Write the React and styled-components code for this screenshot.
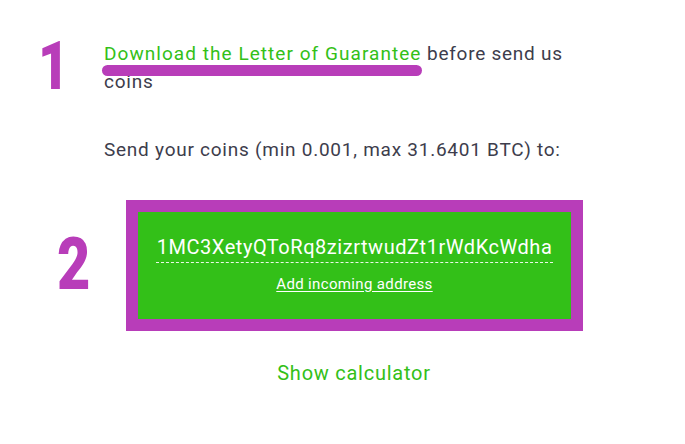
import React from 'react';
import styled, { createGlobalStyle } from 'styled-components';

const GREEN = '#33c018';
const PURPLE = '#b83db9';

const Global = createGlobalStyle`
  html, body { margin: 0; padding: 0; background: #ffffff; }
  body { font-family: Roboto, "Noto Sans", sans-serif; color: #3d3d4c; }
`;

const Page = styled.main`
  display: grid;
  grid-template-columns: 104px 500px;
  padding-top: 40px;
`;

/* Big hand-drawn step numbers: zero line-height so they never stretch their row */
const StepMark = styled.div`
  grid-column: 1;
  grid-row: ${p => p.$row};
  font-family: Roboto, "Noto Sans", sans-serif;
  font-weight: 900;
  font-size: ${p => p.$size}px;
  line-height: 0;
  height: 0;
  color: ${PURPLE};
  margin-left: ${p => p.$left}px;
  margin-top: ${p => p.$top}px;
  transform: scaleX(${p => p.$scale});
  transform-origin: left top;
  align-self: start;
`;

const Text = styled.p`
  grid-column: 2;
  grid-row: ${p => p.$row};
  margin: ${p => p.$top || 0}px 0 0;
  font-size: 19px;
  line-height: 28px;
  letter-spacing: 0.75px;
`;

const GuaranteeLink = styled.a`
  position: relative;
  color: ${GREEN};
  letter-spacing: 1.05px;
  text-decoration: none;
  &::after {
    content: '';
    position: absolute;
    left: -2px;
    right: 0;
    top: 22.5px;
    height: 11px;
    border-radius: 6px;
    background: ${PURPLE};
  }
`;

const AddressFrame = styled.section`
  grid-column: 2;
  grid-row: 3;
  margin: 36px 0 0 22px;
  width: 457px;
  box-sizing: border-box;
  border: 12px solid ${PURPLE};
  background: ${GREEN};
  padding: 23px 18px 0;
  height: 131px;
  display: flex;
  flex-direction: column;
  align-items: center;
`;

const Address = styled.div`
  align-self: stretch;
  text-align: center;
  color: #ffffff;
  font-size: 20px;
  line-height: 24px;
  letter-spacing: 0.55px;
  padding-bottom: 3px;
  border-bottom: 1px dashed rgba(255, 255, 255, 0.9);
  white-space: nowrap;
`;

const AddLink = styled.a`
  margin-top: 12px;
  color: #ffffff;
  font-size: 15px;
  line-height: 18px;
  letter-spacing: 0.35px;
  text-decoration: underline;
  text-underline-offset: 2px;
`;

const Calculator = styled.a`
  grid-column: 2;
  grid-row: 4;
  justify-self: center;
  margin: 30px 0 0 0;
  color: ${GREEN};
  font-size: 20px;
  line-height: 24px;
  letter-spacing: 0.75px;
  text-decoration: none;
`;

export default function App() {
  return (
    <>
      <Global />
      <Page>
        <StepMark $row={1} $size={67} $left={38} $top={26} $scale={0.8}>1</StepMark>
        <Text $row={1}>
          <GuaranteeLink href="#">Download the Letter of Guarantee</GuaranteeLink> before send us coins
        </Text>
        <Text $row={2} $top={40}>Send your coins (min 0.001, max 31.6401 BTC) to:</Text>
        <StepMark $row={3} $size={72} $left={57} $top={101} $scale={0.8}>2</StepMark>
        <AddressFrame>
          <Address>1MC3XetyQToRq8zizrtwudZt1rWdKcWdha</Address>
          <AddLink href="#">Add incoming address</AddLink>
        </AddressFrame>
        <Calculator href="#">Show calculator</Calculator>
      </Page>
    </>
  );
}
